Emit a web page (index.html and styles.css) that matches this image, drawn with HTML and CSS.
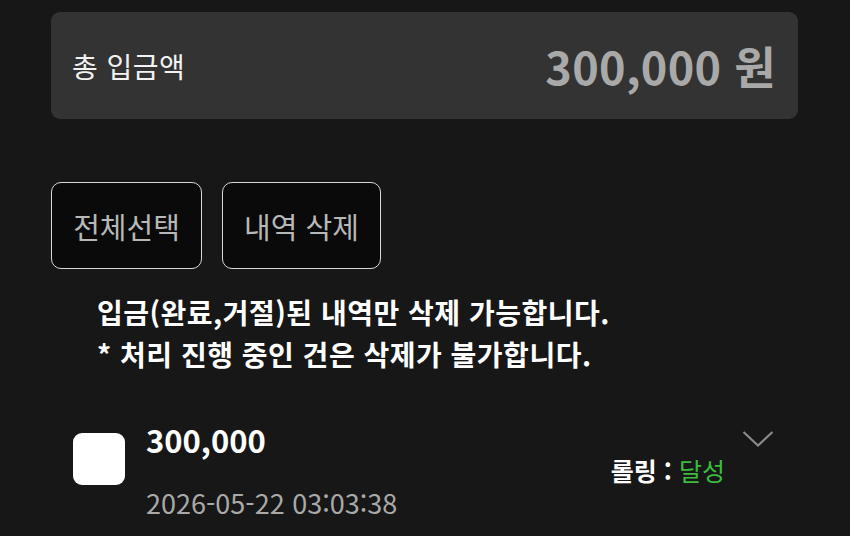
FILE: index.html
```html
<!DOCTYPE html>
<html lang="ko">
<head>
<meta charset="utf-8">
<link rel="stylesheet" href="styles.css">
</head>
<body>
<div class="page">
  <div class="total">
    <span class="total-label">총 입금액</span>
    <span class="total-value">300,000 원</span>
  </div>
  <div class="actions">
    <button class="btn">전체선택</button>
    <button class="btn btn-wide">내역 삭제</button>
  </div>
  <div class="notice">
    <p>입금(완료,거절)된 내역만 삭제 가능합니다.</p>
    <p>* 처리 진행 중인 건은 삭제가 불가합니다.</p>
  </div>
  <div class="item">
    <div class="check"></div>
    <div class="item-main">
      <div class="amount">300,000</div>
      <div class="date">2026-05-22 03:03:38</div>
    </div>
    <div class="item-side">
      <svg class="chev" width="32" height="18" viewBox="0 0 32 18"><path d="M1.5 2 L16 15.5 L30.5 2" fill="none" stroke="#8a8a8a" stroke-width="2.2"/></svg>
      <div class="rolling">롤링 : <span class="ok">달성</span></div>
    </div>
  </div>
</div>
</body>
</html>
```
FILE: styles.css
```css
* { box-sizing: border-box; }
html, body { margin: 0; padding: 0; background: #171717; }
body {
  font-family: "Noto Sans CJK KR", "Noto Sans", sans-serif;
  color: #fff;
  width: 850px;
  height: 536px;
  overflow: hidden;
}
.page { padding: 12px 52px 0 51px; }
.total {
  height: 107px;
  background: #333333;
  border-radius: 9px;
  display: flex;
  align-items: center;
  justify-content: space-between;
  padding: 0 22px 0 21px;
}
.total-label { font-size: 28px; color: #f2f2f2; letter-spacing: 0.5px; }
.total-value { font-size: 45px; font-weight: 700; color: #a9a9a9; letter-spacing: 0.3px; }
.actions { display: flex; gap: 20px; margin-top: 63px; }
.btn {
  font-family: inherit;
  height: 87px;
  width: 151px;
  background: #0a0a0a;
  border: 1.5px solid #d8d8d8;
  border-radius: 10px;
  color: #b8b8b8;
  font-size: 29px;
  padding: 0;
}
.btn-wide { width: 159px; }
.notice { padding-left: 46px; margin-top: 22px; }
.notice p { margin: 0; font-size: 28px; font-weight: 700; line-height: 42px; color: #fff; letter-spacing: 0.5px; }
.item { display: flex; margin-top: 45px; padding-left: 22px; }
.check {
  width: 52px; height: 52px;
  background: #fff;
  border-radius: 9px;
  margin-top: 13px;
}
.item-main { margin-left: 21px; flex: 1; }
.amount { font-size: 31px; font-weight: 700; line-height: 40px; }
.date { font-size: 27px; color: #a9a9a9; margin-top: 23px; line-height: 40px; }
.item-side { display: flex; flex-direction: column; align-items: flex-end; padding-top: 10px; padding-right: 24px; }
.rolling { font-size: 25px; font-weight: 700; margin-top: 4px; margin-right: 49px; white-space: nowrap; }
.rolling .ok { color: #3dbb3d; font-weight: 400; }
```
